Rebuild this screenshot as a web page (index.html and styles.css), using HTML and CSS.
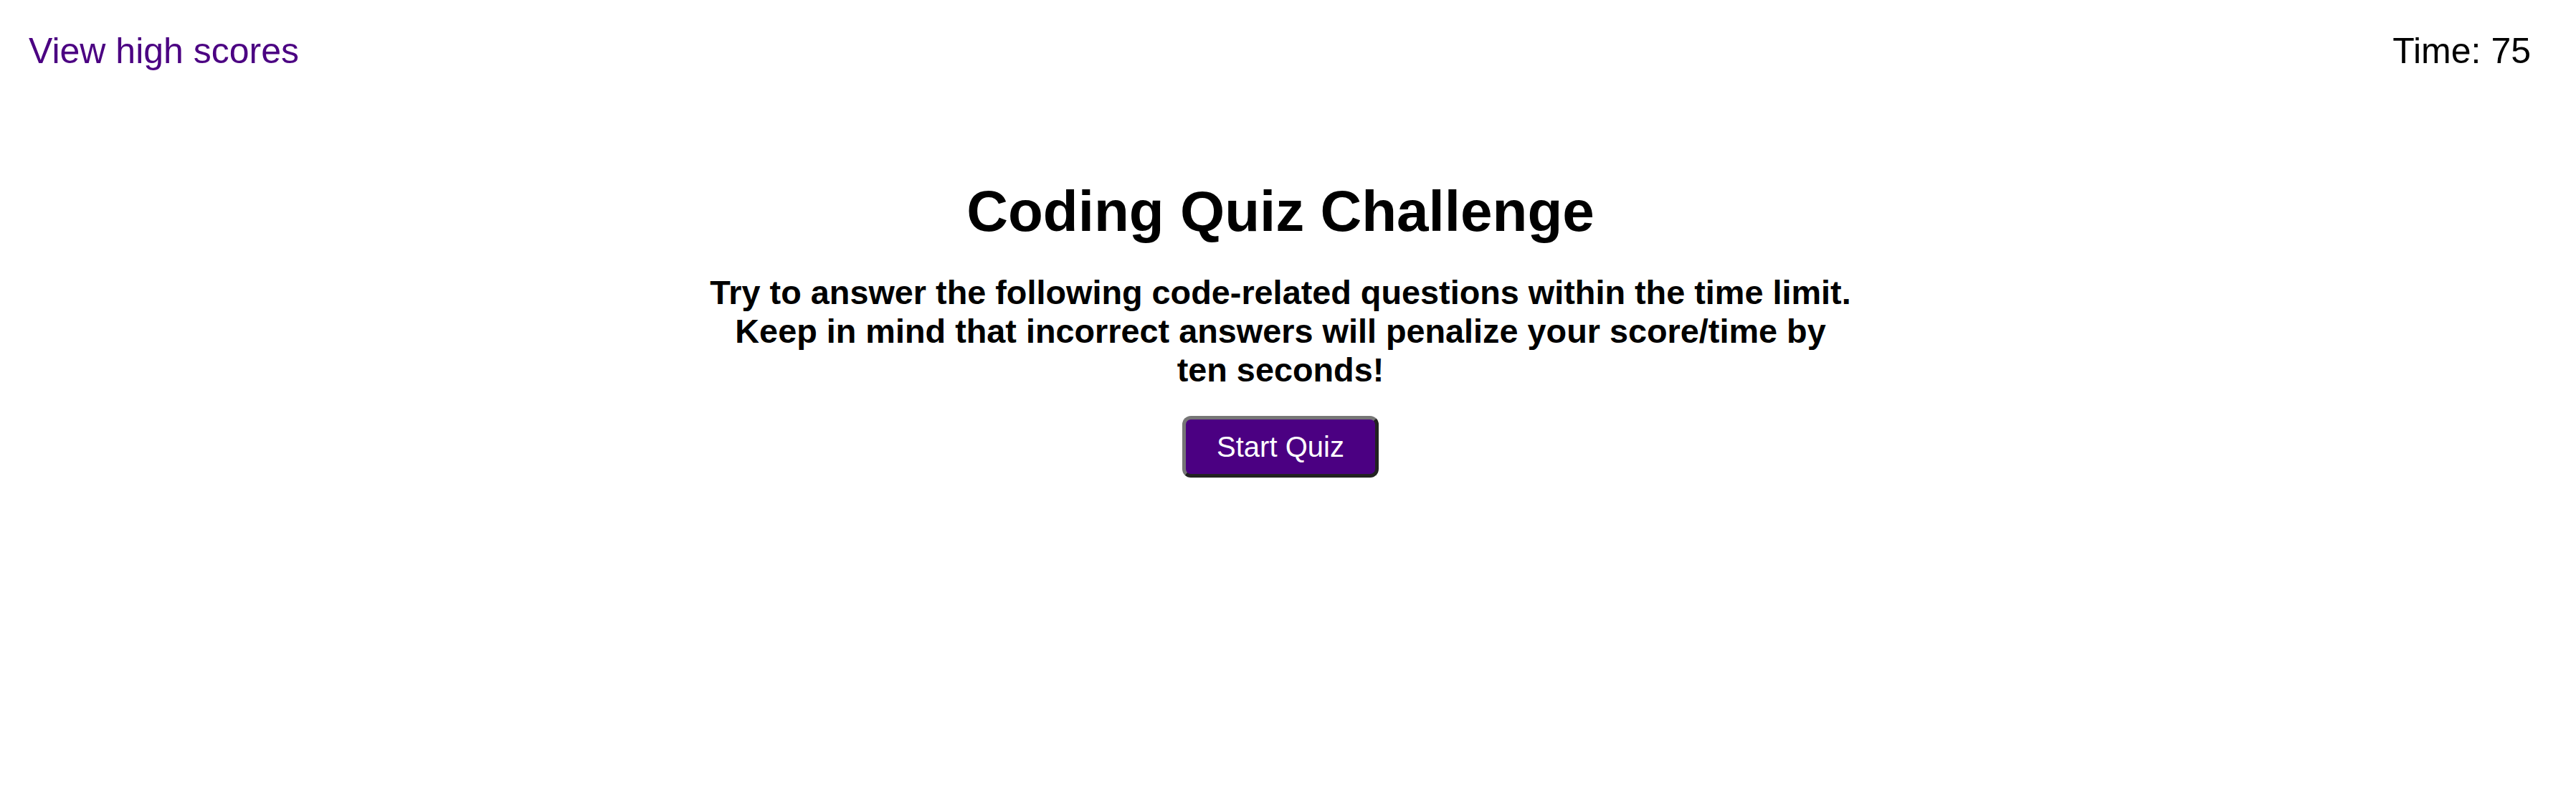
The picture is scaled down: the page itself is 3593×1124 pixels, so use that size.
FILE: index.html
```html
<!DOCTYPE html>
<html lang="en">
<head>
<meta charset="utf-8">
<title>Coding Quiz Challenge</title>
<link rel="stylesheet" href="styles.css">
</head>
<body>
<header class="top-bar">
  <a class="scores-link" href="#">View high scores</a>
  <div class="timer">Time: <span class="timer-value">75</span></div>
</header>
<main class="intro">
  <h1 class="intro-title">Coding Quiz Challenge</h1>
  <h3 class="intro-text">Try to answer the following code-related questions within the time limit. Keep in mind that incorrect answers will penalize your score/time by ten seconds!</h3>
  <button class="start-btn" type="button">Start Quiz</button>
</main>
</body>
</html>
```

FILE: styles.css
```css
html, body {
  margin: 0;
  padding: 0;
  background: #ffffff;
}

body {
  font-family: "Liberation Sans", Arial, sans-serif;
  color: #000000;
}

.top-bar {
  display: flex;
  justify-content: space-between;
  align-items: flex-start;
  padding: 43px 63px 0 40px;
  font-size: 50px;
  line-height: 57.5px;
}

.scores-link {
  color: #4b0082;
  text-decoration: none;
}

.timer {
  color: #000000;
}

.intro {
  margin-right: 21px;
  padding-top: 148px;
  display: flex;
  flex-direction: column;
  align-items: center;
  text-align: center;
}

.intro-title {
  margin: 0;
  font-size: 80px;
  line-height: 92px;
  font-weight: 700;
}

.intro-text {
  margin: 40px 0 0;
  max-width: 1595px;
  font-size: 46.8px;
  line-height: 54px;
  font-weight: 700;
}

.start-btn {
  margin-top: 37px;
  font-family: "Liberation Sans", Arial, sans-serif;
  font-size: 40px;
  line-height: 46px;
  color: #ffffff;
  background: #4b0082;
  padding: 15px 43px;
  border-width: 5px;
  border-style: solid;
  border-color: #767676 #222222 #222222 #767676;
  border-radius: 12px;
  cursor: pointer;
}
```
